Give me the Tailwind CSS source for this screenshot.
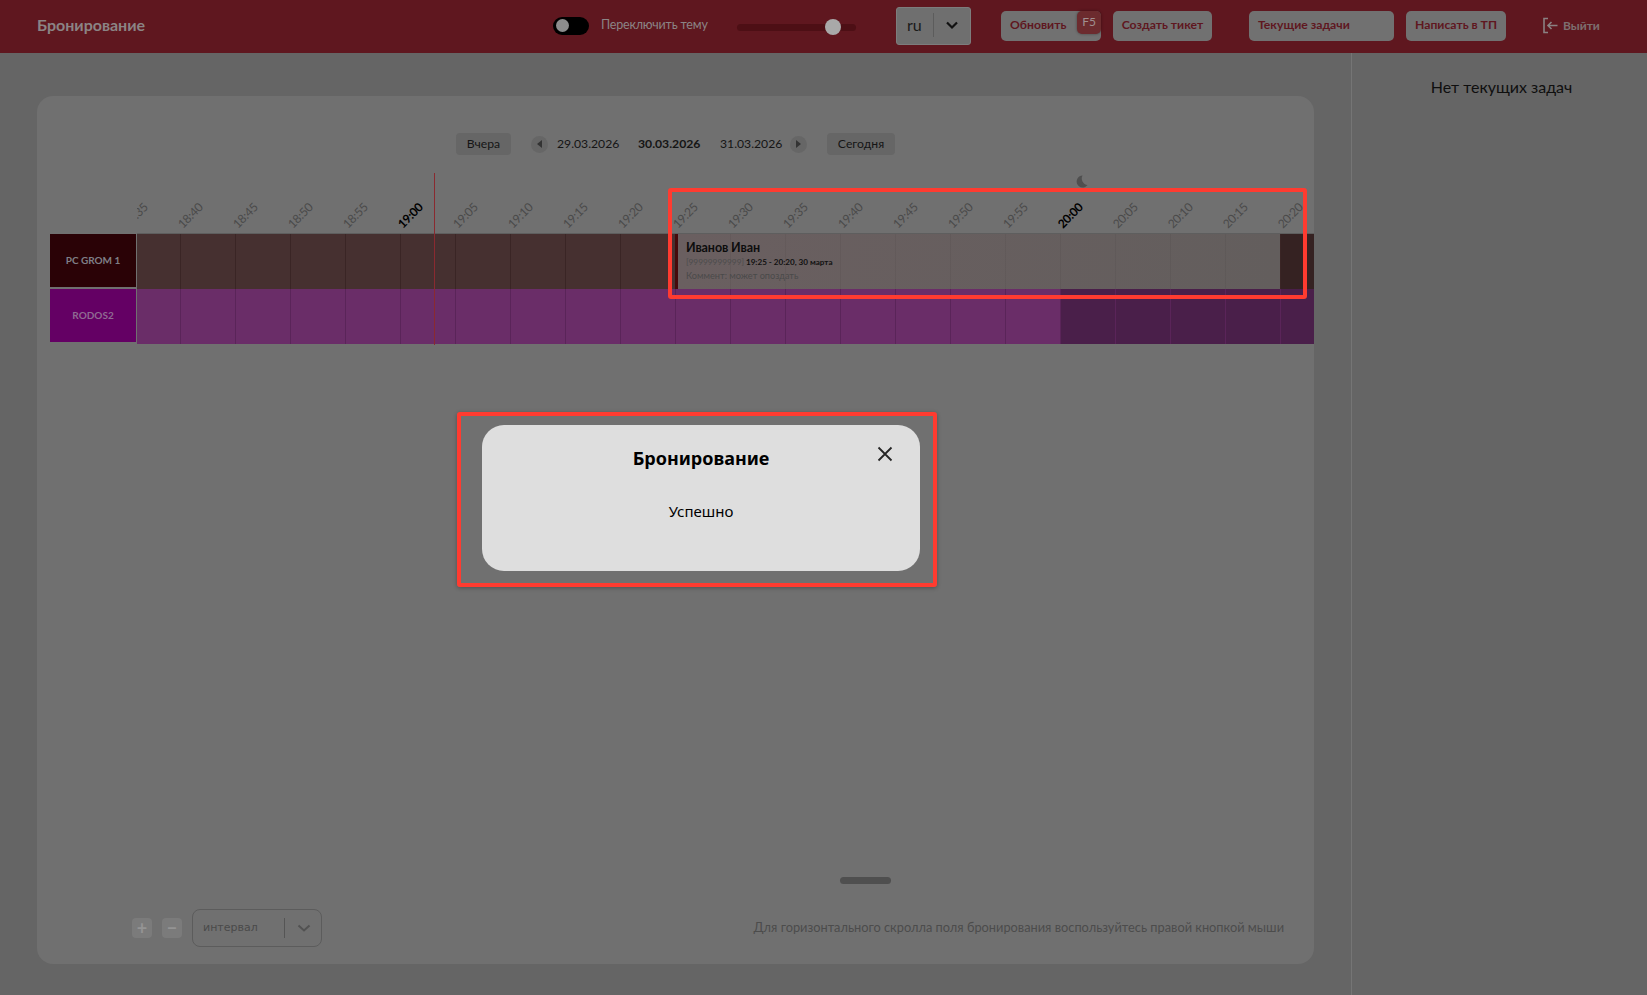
<!DOCTYPE html>
<html lang="ru">
<head>
    <meta charset="UTF-8">
    <title>Бронирование</title>
    <script src="https://cdn.jsdelivr.net/npm/@tailwindcss/browser@4"></script>
</head>
<body class="relative h-[995px] w-[1647px] overflow-hidden bg-[#656565] font-['Lato','Noto_Sans',sans-serif] text-[#111]">

    <header class="flex h-[53px] items-center bg-[#5f171f] pb-[2px] pl-[37px] text-[#8b8485]">
        <h1 class="w-[516px] pb-[1px] text-[16px] font-bold">Бронирование</h1>
        <div class="flex h-[18px] w-[36px] items-center rounded-full bg-black pl-[3px]">
            <span class="size-[13px] rounded-full bg-[#8d8d8d]"></span>
        </div>
        <span class="ml-[12px] w-[136px] text-[12.5px] tracking-[-0.2px]">Переключить тему</span>
        <div class="relative mt-[3px] h-[7px] w-[119px] rounded-full bg-[#4d0f15]">
            <span class="absolute top-[-5px] left-[88px] size-[16px] rounded-full bg-[#a9a9a9]"></span>
        </div>
        <div class="ml-[40px] flex h-[38px] w-[75px] items-center rounded-[3px] border border-[#7d7d7d] bg-[#6f6f6f] pb-[1px]">
            <span class="w-[36px] pl-[10px] text-[16px] text-[#1a1a1a]">ru</span>
            <span class="h-[24px] w-px bg-[#5c5c5c]"></span>
            <svg class="ml-[11px] size-[14px]" viewBox="0 0 14 14" fill="none" stroke="#111" stroke-width="2.2"><path d="M2 4.5l5 5 5-5"/></svg>
        </div>
        <div class="relative ml-[30px] flex h-[30px] w-[100px] items-center rounded-[5px] bg-[#717171] pl-[9px] text-[12.2px] font-bold text-[#5f171f]">
            Обновить
            <span class="absolute top-0 right-0 flex h-[23px] w-[24px] items-center justify-center rounded-[5px] bg-[#6c2b2e] text-[12px] font-normal text-[#a08f90] shadow-[0_0_3px_rgba(0,0,0,0.4)]">F5</span>
        </div>
        <div class="ml-[12px] flex h-[30px] w-[99px] items-center justify-center rounded-[5px] bg-[#717171] text-[12.2px] font-bold text-[#5f171f]">Создать тикет</div>
        <div class="ml-[37px] flex h-[30px] w-[145px] items-center rounded-[5px] bg-[#717171] pl-[9px] text-[12.2px] font-bold text-[#5f171f]">Текущие задачи</div>
        <div class="ml-[12px] flex h-[30px] w-[100px] items-center justify-center rounded-[5px] bg-[#717171] text-[12.2px] font-bold text-[#5f171f]">Написать в ТП</div>
        <div class="ml-[36px] flex items-center gap-[4px] text-[12px] font-bold text-[#7d6f70]">
            <svg class="size-[17px]" viewBox="0 0 17 17" fill="none" stroke="#8a8182" stroke-width="1.6"><path d="M6 1.5H2v14h4"/><path d="M15.5 8.5H6M9.5 5l-3.5 3.5 3.5 3.5"/></svg>
            Выйти
        </div>
    </header>

    <div class="flex h-[942px]">
        <main class="h-full w-[1351px] pt-[43px] pl-[37px]">
            <section class="relative h-[868px] w-[1277px] rounded-[16px] bg-[#707070] pt-[37px] pl-[13px]">
                <nav class="flex h-[22px] items-center pl-[406px] text-[12.2px] text-[#151515]">
                    <span class="flex h-[22px] w-[55px] items-center justify-center rounded-[4px] bg-[#666]">Вчера</span>
                    <span class="ml-[20px] flex size-[17px] items-center justify-center rounded-full bg-[#666]"><span class="h-0 w-0 border-y-[4px] border-r-[5px] border-y-transparent border-r-[#333]"></span></span>
                    <span class="ml-[9px] w-[61px]">29.03.2026</span>
                    <span class="ml-[20px] w-[62px] font-bold whitespace-nowrap">30.03.2026</span>
                    <span class="ml-[20px] w-[61px]">31.03.2026</span>
                    <span class="ml-[9px] flex size-[17px] items-center justify-center rounded-full bg-[#666]"><span class="h-0 w-0 border-y-[4px] border-l-[5px] border-y-transparent border-l-[#333]"></span></span>
                    <span class="ml-[20px] flex h-[22px] w-[68px] items-center justify-center rounded-[4px] bg-[#666]">Сегодня</span>
                </nav>

                <div class="mt-[18px] flex">
                    <div class="w-[87px] shrink-0 pt-[61px] pr-px">
                        <div class="flex h-[53px] items-center justify-center bg-[#2a0206] text-[10px] font-bold text-[#7f7f86]">PC GROM 1</div>
                        <div class="mt-[2px] flex h-[53px] items-center justify-center bg-[#640064] text-[10px] font-bold text-[#8f6a92]">RODOS2</div>
                    </div>
                    <div class="relative h-[172px] w-[1177px] overflow-hidden">
                        <div id="timeline" class="relative ml-[-12px] w-[1300px]">
                            <div id="labels" class="flex h-[61px] border-b border-[#5e5e5e]"></div>
                            <div id="row1" class="relative flex h-[55px]"></div>
                            <div id="row2" class="flex h-[55px]"></div>
                            <div class="absolute top-[61px] left-[550px] flex h-[55px] w-[605px] flex-col border-l-[3px] border-[#460a0c] bg-[repeating-linear-gradient(90deg,transparent_0,transparent_52px,rgba(0,0,0,0.05)_52px,rgba(0,0,0,0.05)_53px,transparent_53px,transparent_55px),linear-gradient(90deg,#6a5f60,#635e5d)] pl-[8px]">
                                <span class="mt-[6px] text-[12.5px] leading-[16px] font-bold tracking-[-0.1px] text-[#0d0d0d]">Иванов Иван</span>
                                <span class="text-[8.1px] leading-[12px] font-bold text-[#111]"><span class="text-[8.3px] font-normal text-[#4c4c4c]">[99999999999]</span> 19:25 - 20:20, 30 марта</span>
                                <span class="mt-[2px] text-[9.2px] leading-[12px] text-[#4a4a4a]">Коммент: может опоздать</span>
                            </div>
                            <span class="absolute top-0 left-[309px] h-[172px] w-px bg-[#8a2a30]"></span>
                            <svg class="absolute top-[2px] left-[950px] size-[13px]" viewBox="0 0 13 13" fill="#4f4f4f"><path d="M7.5 0.5A6 6 0 1 0 12.5 10 6.5 6.5 0 0 1 7.5 0.5z"/></svg>
                        </div>
                    </div>
                </div>

                <div class="absolute top-[781px] left-[803px] h-[7px] w-[51px] rounded-full bg-[#4f4f4f]"></div>

                <div class="absolute right-[30px] bottom-[17px] left-[95px] flex h-[38px] items-center">
                    <span class="flex size-[20px] items-center justify-center rounded-[4px] bg-[#7b7b7b] text-[18px] leading-none font-bold text-[#949494]">+</span>
                    <span class="ml-[10px] flex size-[20px] items-center justify-center rounded-[4px] bg-[#7b7b7b] text-[18px] leading-none font-bold text-[#949494]">−</span>
                    <div class="ml-[10px] flex h-[38px] w-[130px] items-center rounded-[8px] border border-[#5c5c5c]">
                        <span class="w-[91px] pl-[10px] font-['DejaVu_Sans'] text-[11px] text-[#4a4a4a]">интервал</span>
                        <span class="h-[20px] w-px bg-[#555]"></span>
                        <svg class="ml-[12px] size-[14px]" viewBox="0 0 14 14" fill="none" stroke="#525252" stroke-width="2"><path d="M1.5 4.5l5.5 5 5.5-5"/></svg>
                    </div>
                    <span class="ml-auto text-[12.8px] text-[#4c4c4c]">Для горизонтального скролла поля бронирования воспользуйтесь правой кнопкой мыши</span>
                </div>
            </section>
        </main>
        <aside class="h-full flex-1 border-l border-[#757575] pt-[22px] pl-[4px] text-center text-[16px] text-[#0f0f0f]">Нет текущих задач</aside>
    </div>

    <!-- затемнённая подсветка и окно поверх страницы -->
    <div class="absolute top-[188px] left-[668px] h-[111px] w-[639px] rounded-[3px] border-4 border-[#ff3b30]"></div>
    <div class="absolute top-[412px] left-[457px] h-[175px] w-[480px] rounded-[3px] border-4 border-[#ff3b30] shadow-[0_1px_4px_rgba(0,0,0,0.3)]"></div>
    <div class="absolute top-[425px] left-[482px] flex h-[146px] w-[438px] flex-col items-center rounded-[22px] bg-[#dedede] font-['Noto_Sans',sans-serif]">
        <h2 class="mt-[20px] text-[18px] leading-[26px] font-bold text-black">Бронирование</h2>
        <p class="mt-[29px] text-[15px] leading-[22px] text-black">Успешно</p>
        <svg class="absolute top-[21px] left-[395px] size-[16px]" viewBox="0 0 16 16" fill="none" stroke="#262626" stroke-width="1.8"><path d="M1.5 1.5l13 13M14.5 1.5l-13 13"/></svg>
    </div>

    <script>
        var labels = document.getElementById('labels');
        var row1 = document.getElementById('row1');
        var row2 = document.getElementById('row2');
        for (var i = 0; i < 22; i++) {
            var min = 18 * 60 + 35 + i * 5;
            var text = Math.floor(min / 60) + ':' + String(min % 60).padStart(2, '0');
            var hour = min % 60 === 0;
            var night = i >= 17;
            var cell = document.createElement('div');
            cell.className = 'flex h-full w-[55px] shrink-0 items-end pb-[2px] pl-[5px]';
            cell.innerHTML = '<span class="origin-bottom-left -rotate-45 text-[12px] leading-[14px] tracking-[-0.3px] whitespace-nowrap ' + (hour ? 'font-bold text-black' : 'text-[#4a4a4a]') + '">' + text + '</span>';
            labels.appendChild(cell);
            var a = document.createElement('div');
            a.className = 'h-full w-[55px] shrink-0 border-l border-[#3a2525] ' + (night ? 'bg-[#352222]' : 'bg-[#463030]');
            row1.appendChild(a);
            var b = document.createElement('div');
            b.className = 'h-full w-[55px] shrink-0 border-l border-[#5a2459] ' + (night ? 'bg-[#4a1f4a]' : 'bg-[#6a2d68]');
            row2.appendChild(b);
        }
    </script>
</body>
</html>
